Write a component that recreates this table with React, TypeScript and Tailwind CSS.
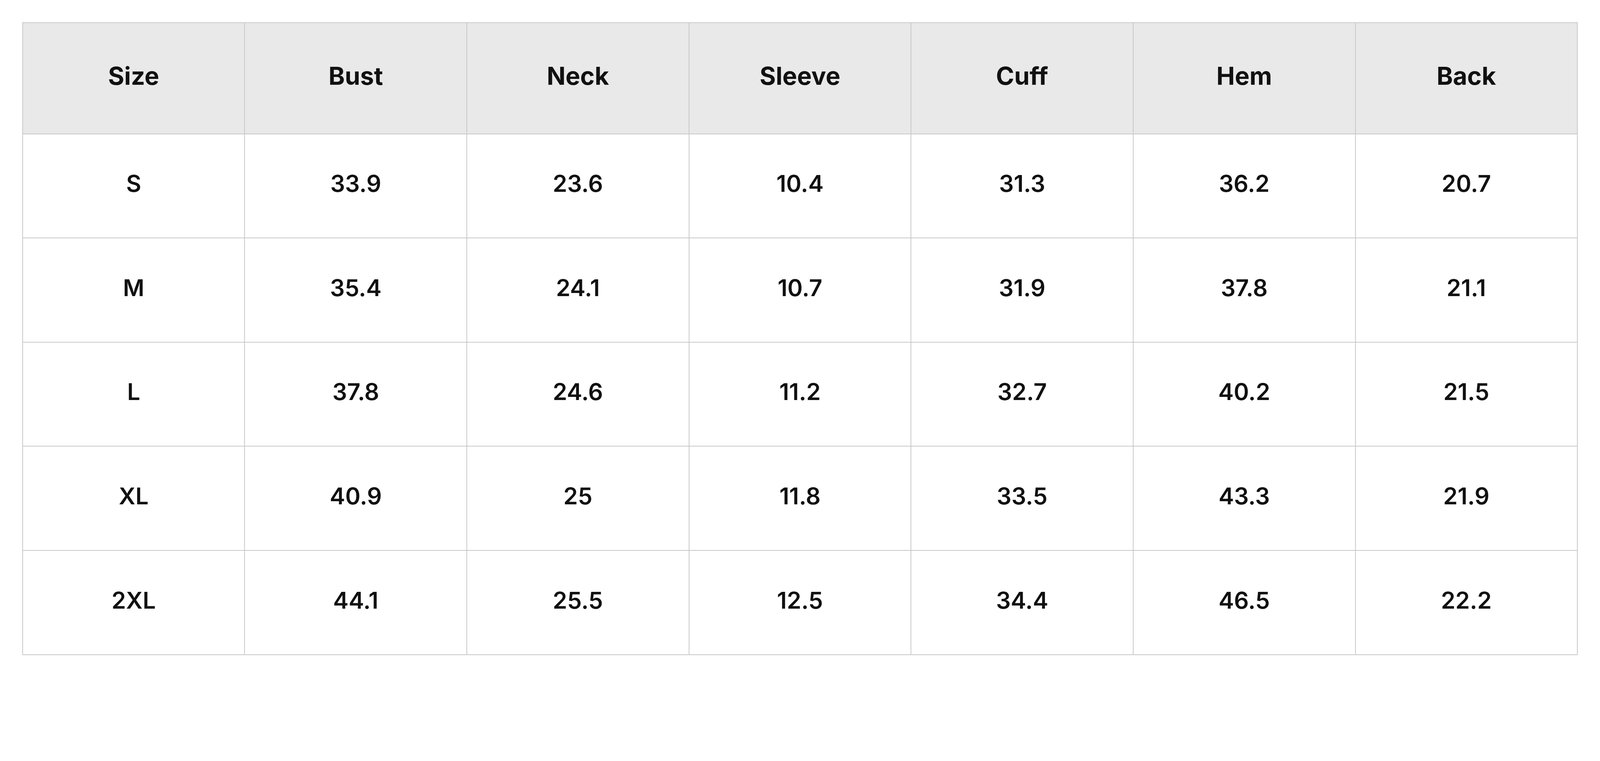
const COLUMNS = ["Size", "Bust", "Neck", "Sleeve", "Cuff", "Hem", "Back"];

const ROWS: string[][] = [
  ["S", "33.9", "23.6", "10.4", "31.3", "36.2", "20.7"],
  ["M", "35.4", "24.1", "10.7", "31.9", "37.8", "21.1"],
  ["L", "37.8", "24.6", "11.2", "32.7", "40.2", "21.5"],
  ["XL", "40.9", "25", "11.8", "33.5", "43.3", "21.9"],
  ["2XL", "44.1", "25.5", "12.5", "34.4", "46.5", "22.2"],
];

// sizes are in vw so the chart keeps its proportions at any viewport width
export default function App() {
  return (
    <div className="bg-white px-[1.389vw] pt-[1.389vw] pb-[1.2vw] font-['Inter','Liberation_Sans',sans-serif] text-[#111111]">
      <div className="grid w-full grid-cols-7 border-l-2 border-t-2 border-[#c9c9c9]">
        {COLUMNS.map((col) => (
          <div
            key={col}
            className="flex h-[6.95vw] items-center justify-center border-b-2 border-r-2 border-[#c9c9c9] bg-[#e9e9e9] pb-[0.3vw] text-[1.54vw] leading-none font-bold"
          >
            {col}
          </div>
        ))}
        {ROWS.map((row) =>
          row.map((cell, i) => (
            <div
              key={row[0] + i}
              className="flex h-[6.51vw] items-center justify-center border-b-2 border-r-2 border-[#c9c9c9] pb-[0.3vw] text-[1.45vw] leading-none font-semibold"
            >
              {cell}
            </div>
          )),
        )}
      </div>
    </div>
  );
}
